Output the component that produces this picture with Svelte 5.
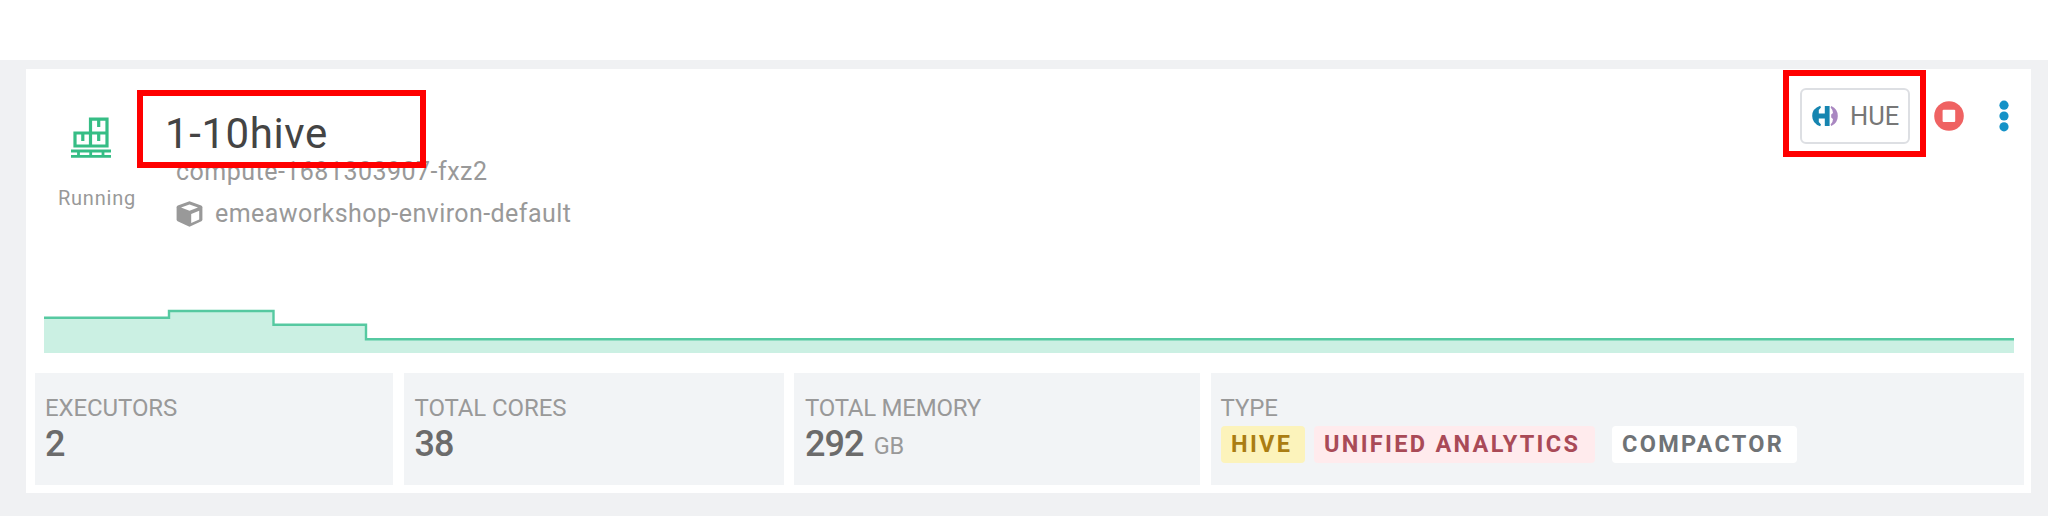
<script>
  const stats = [
    { label: 'EXECUTORS', value: '2', cls: 'executors' },
    { label: 'TOTAL CORES', value: '38', cls: 'cores' },
    { label: 'TOTAL MEMORY', value: '292', unit: 'GB', cls: 'memory' }
  ];
  const tags = [
    { text: 'HIVE', cls: 'hive' },
    { text: 'UNIFIED ANALYTICS', cls: 'unified' },
    { text: 'COMPACTOR', cls: 'compactor' }
  ];
</script>

<div class="page">
  <main>
    <section class="card">
      <header>
        <div class="status">
          <svg class="pallet" width="42" height="42" viewBox="0 0 42 42" fill="none" stroke="#36bd85" stroke-width="3.2">
            <path d="M20.5 16V2.2H37V30.5M5 30.5V16H37M20.5 16V30.5M3.5 29H38.5" />
            <path d="M28.7 3V10M12.8 17V24M28.7 17V24" />
            <path d="M1 34H41M1 39.4H41M8.5 34V39M20.7 34V39M33 34V39" stroke-width="2.8" />
          </svg>
          <span>Running</span>
        </div>
        <div class="identity">
          <h1>1-10hive</h1>
          <div class="compute">compute-1681303907-fxz2</div>
          <div class="environment">
            <svg width="27" height="26" viewBox="0 0 27 26">
              <path d="M13.5.3 25.2 4.6Q26.4 5.1 26.4 6.3V18.6Q26.4 19.8 25.4 20.3L13.5 25.8 1.6 20.3Q.6 19.8.6 18.6V6.3Q.6 5.1 1.8 4.6Z" fill="#999" />
              <path d="M13.5 3.4 22 6.5 13.5 9.8 5 6.5ZM15.2 13 23.2 9.8V18.4L15.2 22.1Z" fill="#fff" />
            </svg>
            <span>emeaworkshop-environ-default</span>
          </div>
        </div>
        <div class="actions">
          <button class="hue">
            <svg width="26" height="22" viewBox="0 0 26 22">
              <path d="M8.2.8Q.2 3.5.2 11T8.2 21.2L9 19.5 6.8 17V13.4H12.8V21H17.6V1H12.8V8.6H6.8V5L9 2.5Z" fill="#1685b0" />
              <path d="M19.3 1Q25.8 4 25.8 11T19.3 21L18.6 19.6Q21 17.2 21 14L19.2 12.6V9.4L21 8Q21 4.8 18.6 2.4Z" fill="#a987c1" />
            </svg>
            <span>HUE</span>
          </button>
          <svg class="stop" width="30" height="30" viewBox="0 0 30 30">
            <circle cx="15" cy="15" r="14.8" fill="#ef6262" />
            <rect x="8.6" y="8.8" width="12.6" height="12.2" rx="1" fill="#fff" />
          </svg>
          <svg class="more" width="10" height="32" viewBox="0 0 10 32" fill="#1592c7">
            <circle cx="5" cy="5.2" r="4.6" />
            <circle cx="5" cy="16" r="4.6" />
            <circle cx="5" cy="26.8" r="4.6" />
          </svg>
        </div>
      </header>

      <svg class="chart" width="1970" height="46" viewBox="0 0 1970 46">
        <path d="M0 46V10.8H125V4H229.5V17.8H322V32.3H1970V46Z" fill="#cbf0e3" />
        <path d="M0 10.8H125V4H229.5V17.8H322V32.3H1970" fill="none" stroke="#56c9a1" stroke-width="2.4" />
      </svg>

      <div class="stats">
        {#each stats as s}
          <div class="stat {s.cls}">
            <div class="label">{s.label}</div>
            <div class="value">{s.value}{#if s.unit}<small>{s.unit}</small>{/if}</div>
          </div>
        {/each}
        <div class="stat type">
          <div class="label">TYPE</div>
          <div class="tags">
            {#each tags as t}
              <span class="tag {t.cls}">{t.text}</span>
            {/each}
          </div>
        </div>
      </div>
    </section>
  </main>
  <div class="mark mark-name"></div>
  <div class="mark mark-hue"></div>
</div>

<style>
  :global(body) { margin: 0; background: #fff; }
  .page {
    position: relative;
    box-sizing: border-box;
    width: 2048px;
    height: 516px;
    padding-top: 60px;
    overflow: hidden;
    font-family: Roboto, "Liberation Sans", sans-serif;
    color: #999;
  }
  main { box-sizing: border-box; height: 456px; padding: 9px 17px 0 26px; background: #f0f1f3; }
  .card { box-sizing: border-box; height: 424px; background: #fff; }
  header { display: flex; height: 238px; }
  .status {
    display: flex;
    flex-direction: column;
    align-items: center;
    box-sizing: border-box;
    width: 110px;
    margin-left: 16px;
    padding-top: 48px;
    font-size: 20px;
    line-height: 24px;
  }
  .pallet { margin-right: 12px; }
  .status span { margin-top: 27px; letter-spacing: 0.8px; white-space: nowrap; }
  .identity { padding-left: 14px; padding-top: 41px; white-space: nowrap; }
  h1 { margin: 0 0 0 -1px; font-weight: 400; font-size: 42px; line-height: 48px; letter-spacing: 0.6px; color: #444; }
  .compute { padding-left: 10px; font-size: 25px; line-height: 28px; letter-spacing: 0.48px; }
  .environment {
    display: flex;
    align-items: center;
    gap: 12px;
    padding-left: 10px;
    margin-top: 14px;
    font-size: 25px;
    line-height: 28px;
    letter-spacing: 0.43px;
  }
  .actions { display: flex; align-items: flex-start; margin-left: auto; padding: 19px 22px 0 0; }
  .hue {
    display: flex;
    align-items: center;
    gap: 12px;
    box-sizing: border-box;
    width: 110px;
    height: 56px;
    padding: 0 0 0 10px;
    border: 2px solid #dddfe3;
    border-radius: 6px;
    background: #fff;
    font: 400 25.5px/30px Roboto, "Liberation Sans", sans-serif;
    color: #777;
  }
  .stop { margin: 13px 0 0 24px; }
  .more { margin: 12px 0 0 35px; }
  .chart { display: block; margin-left: 18px; }
  .stats {
    display: grid;
    grid-template-columns: 358px 380px 406px 813px;
    gap: 10.5px;
    margin: 20px 0 0 9px;
    height: 112px;
  }
  .stat { box-sizing: border-box; padding: 21px 0 0 11px; background: #f2f4f6; white-space: nowrap; }
  .executors, .type { padding-left: 10px; }
  .label { font-size: 24px; line-height: 28px; letter-spacing: -0.1px; }
  .memory .label { letter-spacing: -0.25px; }
  .value { margin-top: 2px; font-size: 36px; line-height: 40px; font-weight: 500; letter-spacing: -0.9px; color: #6b6b6b; }
  .value small { position: relative; top: -2px; margin-left: 10px; font-size: 23.5px; font-weight: 400; letter-spacing: -0.2px; color: #999; }
  .tags { display: flex; margin-top: 4px; }
  .tag {
    box-sizing: border-box;
    height: 37px;
    padding-left: 10.5px;
    border-radius: 4px;
    font-size: 23.5px;
    line-height: 37px;
    font-weight: 700;
    letter-spacing: 2.3px;
  }
  .hive { width: 84px; background: #fcf3bb; color: #aa7d12; }
  .unified { width: 281px; margin-left: 9px; background: #ffebed; color: #a94a57; }
  .compactor { width: 185px; margin-left: 17px; background: #fff; color: #6f7376; }
  .mark { position: absolute; box-sizing: border-box; border: 6px solid #f00; }
  .mark-name { left: 137px; top: 90px; width: 289px; height: 78px; }
  .mark-hue { left: 1783px; top: 70px; width: 143px; height: 87px; }
</style>
